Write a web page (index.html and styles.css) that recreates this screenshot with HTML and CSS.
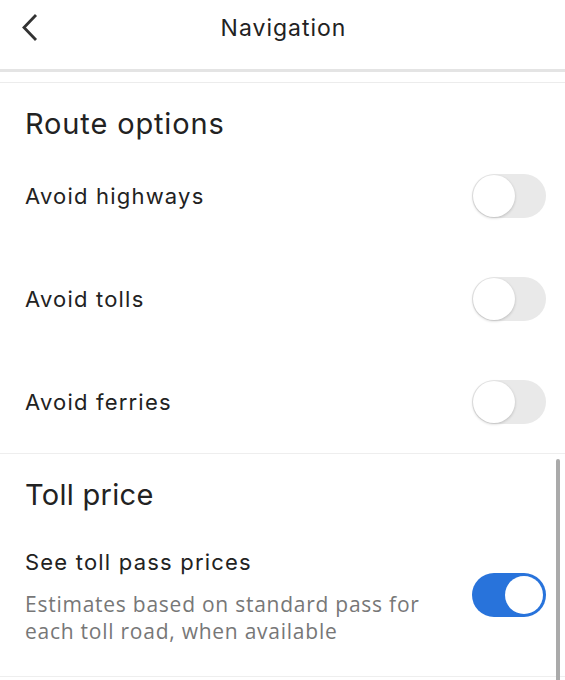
FILE: index.html
```html
<!DOCTYPE html>
<html>
<head>
<meta charset="utf-8">
<link rel="stylesheet" href="styles.css">
</head>
<body>
<header class="topbar">
  <button class="back" aria-label="Back">
    <svg width="22" height="30" viewBox="0 0 22 30"><path d="M16 2 L4 14.5 L16 27" fill="none" stroke="#333" stroke-width="2.8"/></svg>
  </button>
  <h1 class="title">Navigation</h1>
</header>
<div class="topline"></div>
<main class="content">
  <section class="section">
    <h2 class="section-title">Route options</h2>
    <div class="row"><span class="label">Avoid highways</span><span class="toggle"><span class="knob"></span></span></div>
    <div class="row"><span class="label">Avoid tolls</span><span class="toggle"><span class="knob"></span></span></div>
    <div class="row"><span class="label">Avoid ferries</span><span class="toggle"><span class="knob"></span></span></div>
  </section>
  <section class="section second">
    <h2 class="section-title">Toll price</h2>
    <div class="row tall">
      <div class="text">
        <span class="label">See toll pass prices</span>
        <span class="sub">Estimates based on standard pass for each toll road, when available</span>
      </div>
      <span class="toggle on"><span class="knob"></span></span>
    </div>
  </section>
  <div class="scrollbar"></div>
</main>
</body>
</html>
```

FILE: styles.css
```css
* { box-sizing: border-box; }
html, body { margin: 0; padding: 0; background: #fff; }
body {
  font-family: Inter, Roboto, sans-serif;
  color: #222;
  width: 565px;
  height: 680px;
  overflow: hidden;
}
.topbar {
  height: 72px;
  display: flex;
  justify-content: center;
  position: relative;
  border-bottom: 3px solid #e4e4e4;
}
.back {
  position: absolute;
  left: 20px;
  top: 13px;
  background: none;
  border: 0;
  padding: 0;
  display: flex;
}
.title {
  margin: 0;
  font-weight: 400;
  font-size: 23px;
  letter-spacing: 1px;
  line-height: 30px;
  padding-top: 13px;
  padding-left: 2px;
  color: #222;
}
.topline {
  height: 1px;
  background: #ececec;
  margin-top: 10px;
}
.content { position: relative; }
.section {
  border-bottom: 1px solid #eee;
}
.section-title {
  margin: 0;
  font-weight: 400;
  font-size: 29px;
  letter-spacing: 0.85px;
  color: #222;
  padding: 20px 0 0 25px;
  height: 61px;
  line-height: 41px;
}
.row {
  display: flex;
  align-items: center;
  justify-content: space-between;
  height: 103px;
  padding: 0 19px 0 25px;
}
.label {
  font-size: 22px;
  letter-spacing: 1.2px;
  line-height: 30px;
  color: #222;
}
.second .section-title {
  padding-top: 22px;
  height: 60px;
  line-height: 38px;
  letter-spacing: 0.3px;
}
.row.tall {
  height: 162px;
  padding-top: 0;
}
.text {
  display: flex;
  flex-direction: column;
  width: 430px;
  padding-top: 2px;
}
.sub {
  font-family: "Open Sans", sans-serif;
  font-size: 21px;
  letter-spacing: 0.75px;
  color: #777;
  line-height: 27px;
  margin-top: 14px;
}
.toggle {
  width: 74px;
  height: 44px;
  border-radius: 22px;
  background: #e9e9e9;
  position: relative;
  flex: none;
}
.knob {
  position: absolute;
  left: 1px;
  top: 1px;
  width: 42px;
  height: 42px;
  border-radius: 50%;
  background: #fff;
  box-shadow: 0 1px 3px rgba(0,0,0,0.2);
}
.toggle.on {
  background: #2873db;
}
.toggle.on .knob {
  left: 33px;
  top: 3px;
  width: 38px;
  height: 38px;
  box-shadow: none;
}
.scrollbar {
  position: absolute;
  left: 556px;
  top: 376px;
  width: 4px;
  height: 230px;
  background: #aaa;
  border-radius: 2px;
}
```
